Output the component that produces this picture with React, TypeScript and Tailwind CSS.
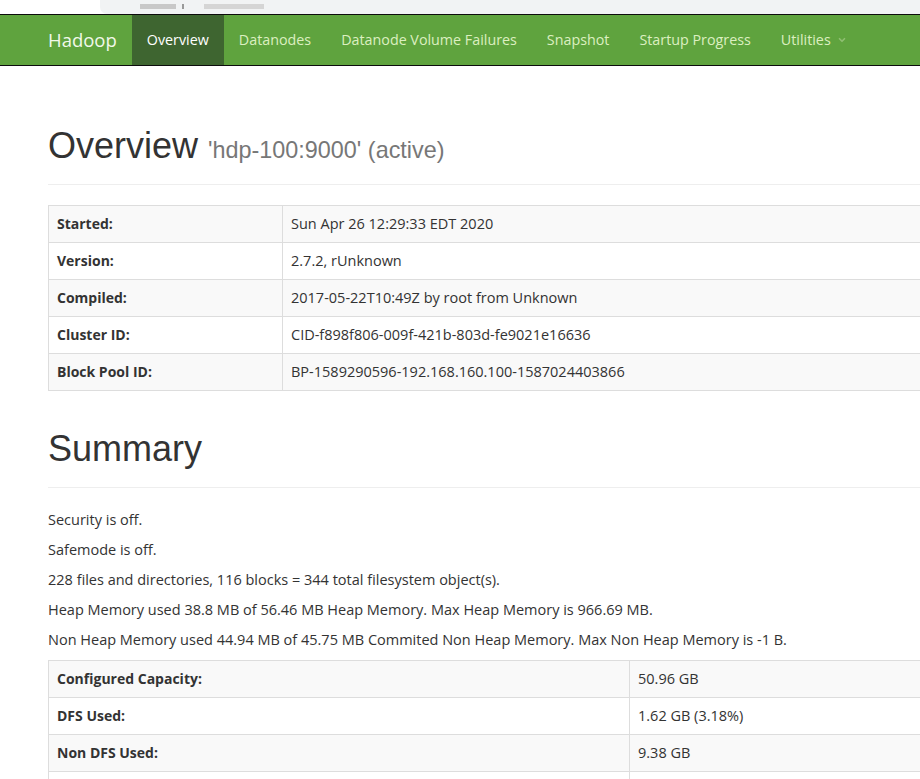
import { ChevronDown } from "lucide-react";

const navItems = [
  { label: "Overview", active: true },
  { label: "Datanodes" },
  { label: "Datanode Volume Failures" },
  { label: "Snapshot" },
  { label: "Startup Progress" },
];

const overviewRows = [
  ["Started:", "Sun Apr 26 12:29:33 EDT 2020"],
  ["Version:", "2.7.2, rUnknown"],
  ["Compiled:", "2017-05-22T10:49Z by root from Unknown"],
  ["Cluster ID:", "CID-f898f806-009f-421b-803d-fe9021e16636"],
  ["Block Pool ID:", "BP-1589290596-192.168.160.100-1587024403866"],
];

const summaryLines = [
  "Security is off.",
  "Safemode is off.",
  "228 files and directories, 116 blocks = 344 total filesystem object(s).",
  "Heap Memory used 38.8 MB of 56.46 MB Heap Memory. Max Heap Memory is 966.69 MB.",
  "Non Heap Memory used 44.94 MB of 45.75 MB Commited Non Heap Memory. Max Non Heap Memory is -1 B.",
];

const capacityRows = [
  ["Configured Capacity:", "50.96 GB"],
  ["DFS Used:", "1.62 GB (3.18%)"],
  ["Non DFS Used:", "9.38 GB"],
  ["DFS Remaining:", "39.96 GB (78.42%)"],
];

const InfoTable = ({ rows, labelWidth }: { rows: string[][]; labelWidth: string }) => (
  <table className="w-[1140px] border-collapse border border-[#ddd] text-[14.5px] leading-5 text-[#333]">
    <tbody>
      {rows.map(([k, v], i) => (
        <tr key={k} className={i % 2 === 0 ? "bg-[#f9f9f9]" : "bg-white"}>
          <th className={`${labelWidth} h-[37px] border border-[#ddd] px-2 py-2 text-left text-[14px] font-bold`}>{k}</th>
          <td className="border border-[#ddd] px-2 py-2">{v}</td>
        </tr>
      ))}
    </tbody>
  </table>
);

export default function App() {
  return (
    <div className="w-[920px] h-[779px] overflow-hidden bg-white font-['Open_Sans',sans-serif]">
      {/* browser chrome sliver */}
      <div className="h-[14px] flex items-end bg-white">
        <div className="ml-[100px] h-[14px] flex-1 bg-[#f1f3f4] rounded-bl-[7px] flex items-end">
          <span className="ml-[40px] mb-[5px] h-[5px] w-[36px] bg-[#c8c8c8]" />
          <span className="ml-[6px] mb-[5px] h-[5px] w-[2px] bg-[#999]" />
          <span className="ml-[20px] mb-[5px] h-[5px] w-[60px] bg-[#d5d5d5]" />
        </div>
      </div>

      {/* navbar */}
      <nav className="w-[1300px] h-[52px] bg-[#5fa33e] border-y border-[#0c0c0c] flex items-stretch pl-[33px]">
        <a className="px-[15px] flex items-center text-[18.5px] text-[#f1f8ea]">Hadoop</a>
        <ul className="flex items-stretch text-[14.3px]">
          {navItems.map((n) => (
            <li
              key={n.label}
              className={`px-[15px] flex items-center ${n.active ? "bg-[#3e6530] text-white" : "text-[#dcefc0]"}`}
            >
              {n.label}
            </li>
          ))}
          <li className="px-[15px] flex items-center gap-[6px] text-[#dcefc0]">
            Utilities
            <ChevronDown className="w-[10px] h-[10px] text-[#8fbf72]" strokeWidth={4} />
          </li>
        </ul>
      </nav>

      <div className="w-[1200px] pl-[48px]">
        <div className="mt-[60px] pb-[18px] border-b border-[#eee]">
          <h1 className="h-[40px] text-[36px] leading-[40px] text-[#333] font-['Liberation_Sans',Arial,sans-serif]">
            Overview <small className="text-[23.4px] leading-none text-[#777]">'hdp-100:9000' (active)</small>
          </h1>
        </div>

        <div className="mt-[20px]">
          <InfoTable rows={overviewRows} labelWidth="w-[234px]" />
        </div>

        <div className="mt-[38px] pb-[18px] border-b border-[#eee]">
          <h1 className="h-[40px] text-[36px] leading-[40px] text-[#333] font-['Liberation_Sans',Arial,sans-serif]">Summary</h1>
        </div>

        <div className="mt-[22px] text-[14.5px] leading-5 text-[#333]">
          {summaryLines.map((l) => (
            <p key={l} className="mb-[10px]">{l}</p>
          ))}
        </div>

        <InfoTable rows={capacityRows} labelWidth="w-[581px]" />
      </div>
    </div>
  );
}
